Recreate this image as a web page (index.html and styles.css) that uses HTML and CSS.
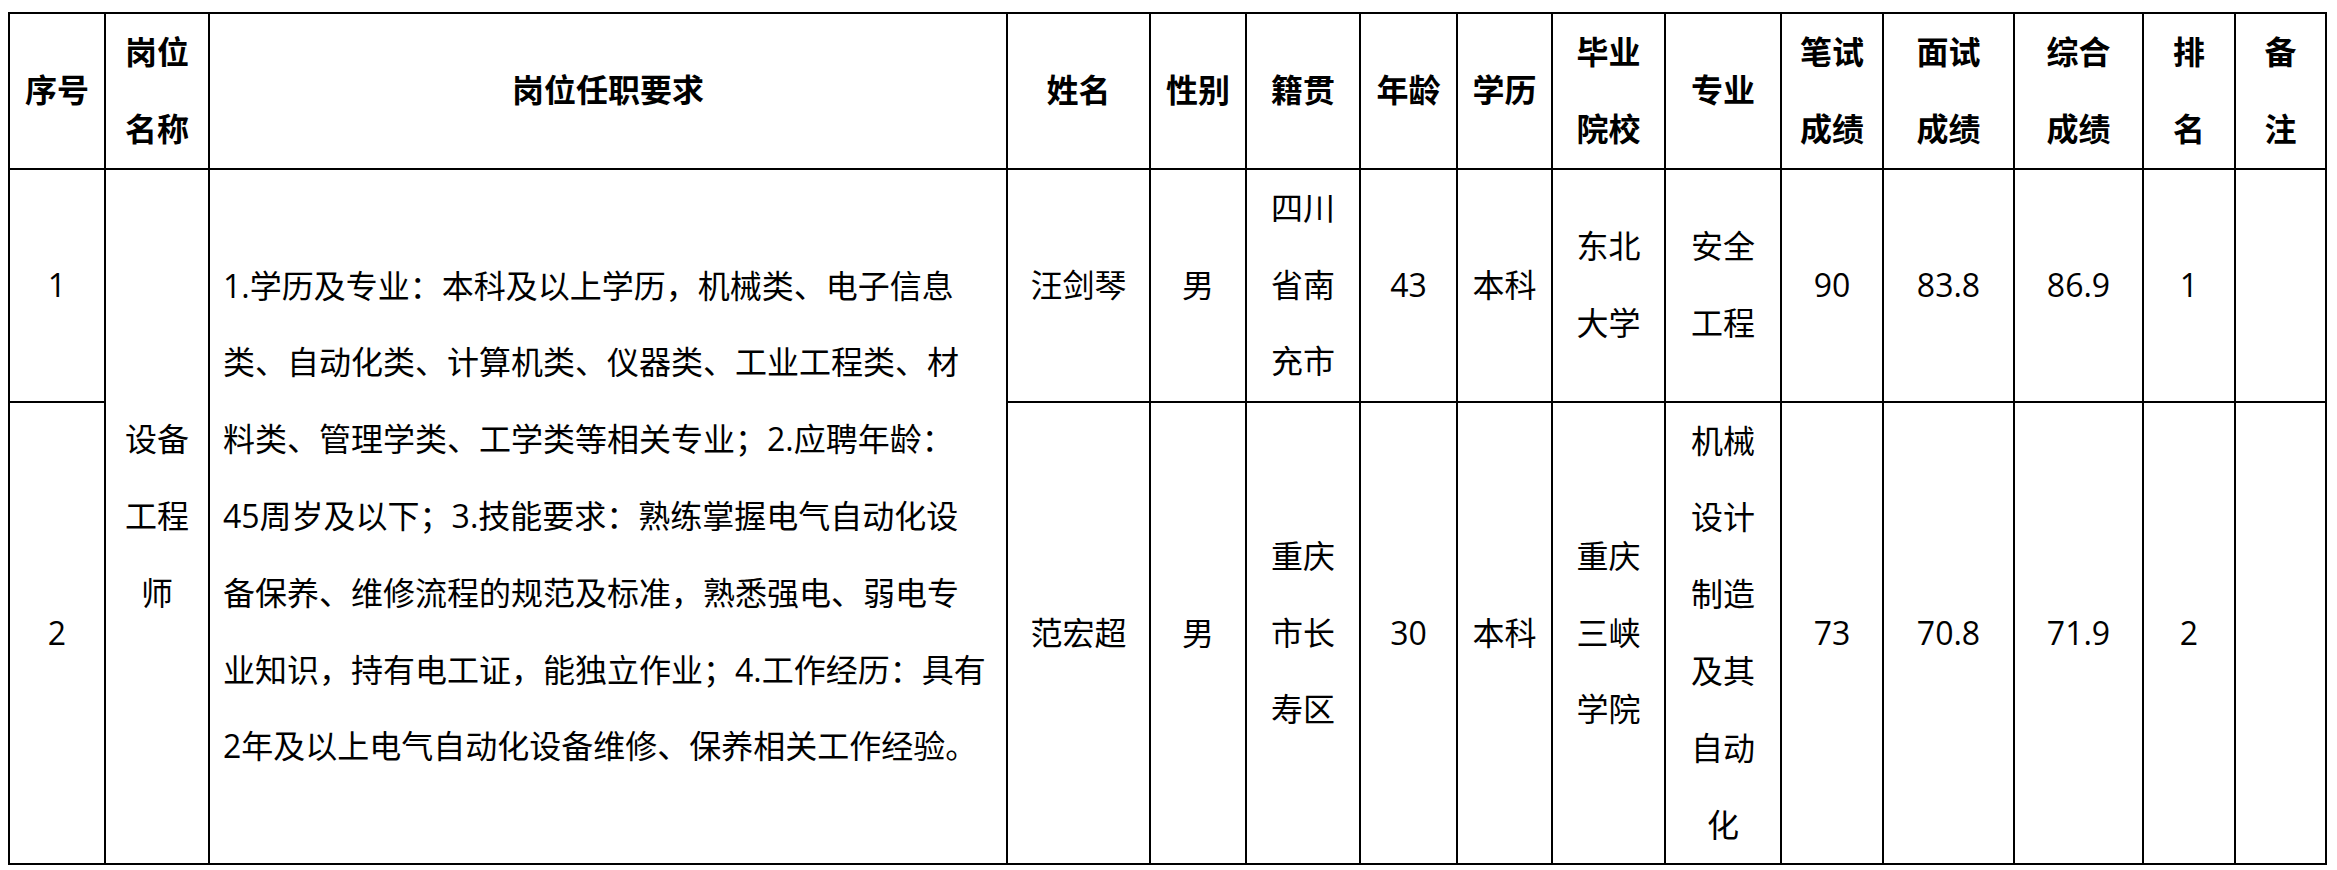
FILE: index.html
```html
<!DOCTYPE html>
<html lang="zh-CN">
<head>
<meta charset="utf-8">
<title>岗位任职要求</title>
<link rel="stylesheet" href="styles.css">
</head>
<body>
<div class="page">
<table class="grid">
  <colgroup>
    <col class="w96"><col class="w104"><col class="w798"><col class="w143"><col class="w96">
    <col class="w114"><col class="w97"><col class="w95"><col class="w113"><col class="w116">
    <col class="w102"><col class="w131"><col class="w129"><col class="w92"><col class="w91">
  </colgroup>
  <thead>
    <tr class="head">
      <th>序号</th>
      <th>岗位<br>名称</th>
      <th>岗位任职要求</th>
      <th>姓名</th>
      <th>性别</th>
      <th>籍贯</th>
      <th>年龄</th>
      <th>学历</th>
      <th>毕业<br>院校</th>
      <th>专业</th>
      <th>笔试<br>成绩</th>
      <th>面试<br>成绩</th>
      <th>综合<br>成绩</th>
      <th>排<br>名</th>
      <th>备<br>注</th>
    </tr>
  </thead>
  <tbody>
    <tr class="r1">
      <td>1</td>
      <td rowspan="2">设备<br>工程<br>师</td>
      <td rowspan="2" class="req">1.学历及专业：本科及以上学历，机械类、电子信息<br>类、自动化类、计算机类、仪器类、工业工程类、材<br>料类、管理学类、工学类等相关专业；2.应聘年龄：<br>45周岁及以下；3.技能要求：熟练掌握电气自动化设<br>备保养、维修流程的规范及标准，熟悉强电、弱电专<br>业知识，持有电工证，能独立作业；4.工作经历：具有<br>2年及以上电气自动化设备维修、保养相关工作经验。</td>
      <td>汪剑琴</td>
      <td>男</td>
      <td>四川<br>省南<br>充市</td>
      <td>43</td>
      <td>本科</td>
      <td>东北<br>大学</td>
      <td>安全<br>工程</td>
      <td>90</td>
      <td>83.8</td>
      <td>86.9</td>
      <td>1</td>
      <td></td>
    </tr>
    <tr class="r2">
      <td>2</td>
      <td>范宏超</td>
      <td>男</td>
      <td>重庆<br>市长<br>寿区</td>
      <td>30</td>
      <td>本科</td>
      <td>重庆<br>三峡<br>学院</td>
      <td>机械<br>设计<br>制造<br>及其<br>自动<br>化</td>
      <td>73</td>
      <td>70.8</td>
      <td>71.9</td>
      <td>2</td>
      <td></td>
    </tr>
  </tbody>
</table>
</div>
</body>
</html>
```
FILE: styles.css
```css
html, body {
  margin: 0;
  padding: 0;
  background: #ffffff;
}

.page {
  padding: 12px 0 0 8px;
}

.grid {
  border-collapse: collapse;
  table-layout: fixed;
  width: 2319px;
  font-family: "Open Sans", "Noto Sans CJK SC", sans-serif;
  font-size: 32px;
  line-height: 76.8px;
  color: #000000;
}

.grid th,
.grid td {
  border: 2px solid #000000;
  padding: 0 4px;
  text-align: center;
  vertical-align: middle;
  white-space: nowrap;
  overflow: hidden;
}

.grid th {
  font-weight: 700;
}

.grid td.req {
  text-align: left;
  padding: 0 0 0 13px;
}

.head { height: 154px; }
.r1 { height: 233px; }
.r2 { height: 461px; }

.w96 { width: 96px; }
.w104 { width: 104px; }
.w798 { width: 798px; }
.w143 { width: 143px; }
.w114 { width: 114px; }
.w97 { width: 97px; }
.w95 { width: 95px; }
.w113 { width: 113px; }
.w116 { width: 116px; }
.w102 { width: 102px; }
.w131 { width: 131px; }
.w129 { width: 129px; }
.w92 { width: 92px; }
.w91 { width: 91px; }
```
